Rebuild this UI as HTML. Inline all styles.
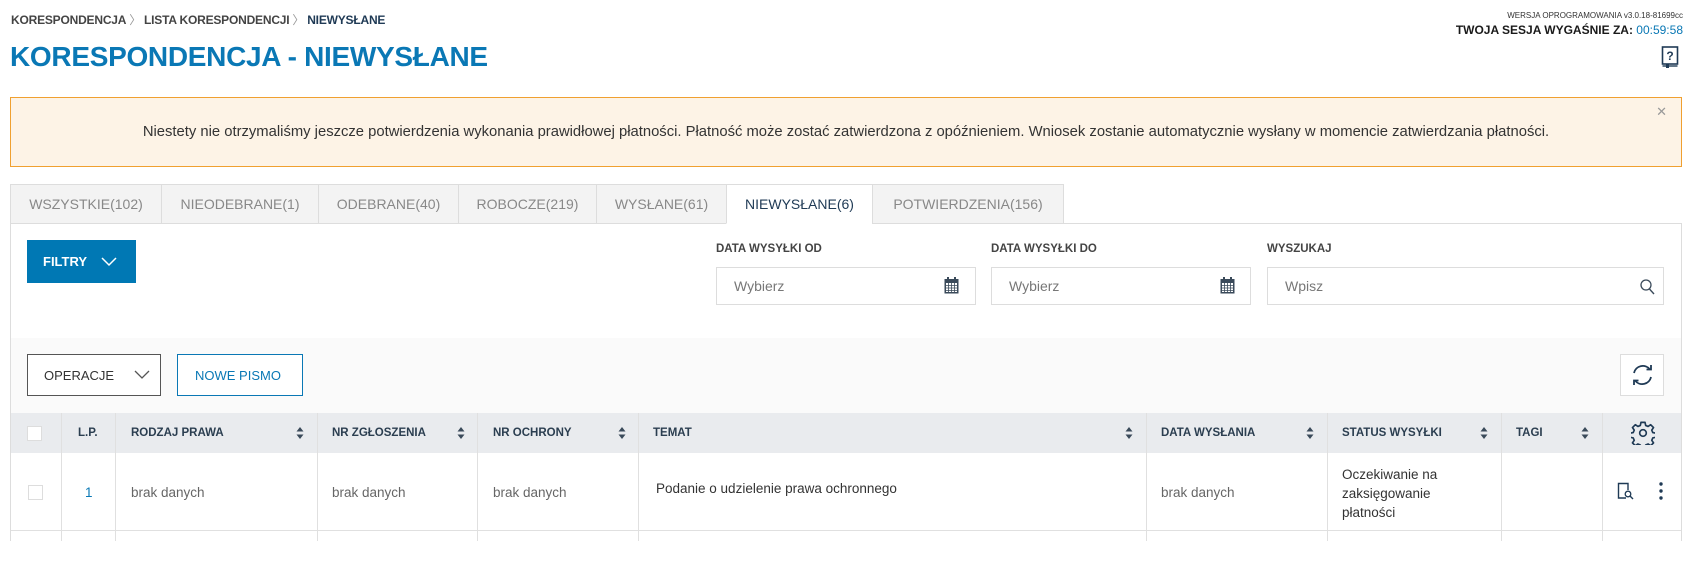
<!DOCTYPE html>
<html><head><meta charset="utf-8"><style>
*{box-sizing:border-box;margin:0;padding:0}
body{width:1699px;height:565px;overflow:hidden;background:#fff;font-family:"Liberation Sans",sans-serif;color:#333;position:relative}
.a{position:absolute}
.bc{left:11px;top:11px;font-size:12px;font-weight:bold;color:#444;letter-spacing:-0.2px}
.bc span{color:#999;font-weight:normal;margin:0 3px}
.bc b{color:#1f3a55}
.title{left:10px;top:41px;font-size:28px;font-weight:bold;color:#0a78b5;letter-spacing:-0.3px}
.ver{right:16px;top:11px;font-size:8px;color:#333}
.ses{right:16px;top:23px;font-size:12px;font-weight:bold;color:#1a1a1a}
.ses i{font-style:normal;color:#0a78b5;font-weight:normal}
.alert{left:10px;top:97px;width:1672px;height:70px;background:#fdf3e6;border:1px solid #f0a030;font-size:14.8px;color:#333;text-align:center;line-height:68px}
.close{right:14px;top:-1px;line-height:30px;color:#999;font-size:13px}
.tabs{left:10px;top:184px;height:40px;display:flex}
.tab{height:40px;background:#f3f3f3;border:1px solid #ddd;border-right:none;color:#888;font-size:14px;display:flex;align-items:center;justify-content:center}
.tab.act{background:#fff;color:#1f3a55;border-bottom-color:#fff}
.panel{left:10px;top:223px;width:1672px;height:318px;border:1px solid #ddd;border-bottom:none}
.btnf{left:27px;top:240px;width:109px;height:43px;background:#0078b4;color:#fff;font-weight:bold;font-size:13px;display:flex;align-items:center;padding-left:16px}
.lbl{font-size:11.5px;font-weight:bold;color:#444;top:243px}
.inp{top:267px;height:38px;border:1px solid #ddd;background:#fff;font-size:14px;color:#777;padding-left:17px;line-height:36px}
.tool{left:11px;top:338px;width:1670px;height:75px;background:#fafafa}
.btn{top:354px;height:42px;font-size:13px;display:flex;align-items:center;padding-left:16px;background:#fff}
.thead{left:11px;top:413px;width:1670px;height:40px;background:#e9ebee}
.th{top:413px;height:40px;line-height:40px;font-size:11.5px;font-weight:bold;color:#2b3e50}
.vl{width:1px;background:#e0e0e0;top:413px;height:128px}
.td{font-size:13.5px;color:#666}
.sort{width:8px;height:14px;top:426px}
</style></head><body>
<div class="a bc">KORESPONDENCJA<span>〉</span>LISTA KORESPONDENCJI<span>〉</span><b>NIEWYSŁANE</b></div>
<div class="a title">KORESPONDENCJA - NIEWYSŁANE</div>
<div class="a ver">WERSJA OPROGRAMOWANIA v3.0.18-81699cc</div>
<div class="a ses">TWOJA SESJA WYGAŚNIE ZA: <i>00:59:58</i></div>
<svg class="a" style="left:1661px;top:46px" width="18" height="23" viewBox="0 0 18 23"><rect x="1.5" y="1" width="15" height="17" fill="none" stroke="#1f3a55" stroke-width="1.6"/><line x1="1.5" y1="20" x2="16.5" y2="20" stroke="#1f3a55" stroke-width="1.4"/><rect x="5" y="18" width="3" height="4" fill="#1f3a55"/><text x="9" y="14" font-size="12" font-weight="bold" text-anchor="middle" fill="#1f3a55" font-family="Liberation Sans">?</text></svg>
<div class="a alert">Niestety nie otrzymaliśmy jeszcze potwierdzenia wykonania prawidłowej płatności. Płatność może zostać zatwierdzona z opóźnieniem. Wniosek zostanie automatycznie wysłany w momencie zatwierdzania płatności.<div class="a close">✕</div></div>
<div class="a panel"></div>
<div class="a tabs">
<div class="tab" style="width:151px">WSZYSTKIE(102)</div>
<div class="tab" style="width:157px">NIEODEBRANE(1)</div>
<div class="tab" style="width:140px">ODEBRANE(40)</div>
<div class="tab" style="width:138px">ROBOCZE(219)</div>
<div class="tab" style="width:130px">WYSŁANE(61)</div>
<div class="tab act" style="width:146px">NIEWYSŁANE(6)</div>
<div class="tab" style="width:192px;border-right:1px solid #ddd">POTWIERDZENIA(156)</div>
</div>
<div class="a btnf">FILTRY <svg style="margin-left:14px" width="16" height="10" viewBox="0 0 16 10"><path d="M1 1L8 8L15 1" fill="none" stroke="#fff" stroke-width="1.5"/></svg></div>
<div class="a lbl" style="left:716px">DATA WYSYŁKI OD</div>
<div class="a lbl" style="left:991px">DATA WYSYŁKI DO</div>
<div class="a lbl" style="left:1267px">WYSZUKAJ</div>
<div class="a inp" style="left:716px;width:260px">Wybierz</div>
<div class="a inp" style="left:991px;width:260px">Wybierz</div>
<div class="a inp" style="left:1267px;width:397px">Wpisz</div>
<svg class="a" style="left:944px;top:277px" width="15" height="17" viewBox="0 0 15 17"><rect x="0.5" y="2" width="14" height="14.5" fill="#3a4a5a"/><rect x="3" y="0" width="2" height="4" fill="#3a4a5a"/><rect x="10" y="0" width="2" height="4" fill="#3a4a5a"/><rect x="2" y="6" width="11" height="9" fill="#fff"/><path d="M2 8.5h11M2 11h11M2 13.5h11M4.5 6v9M7.5 6v9M10.5 6v9" stroke="#3a4a5a" stroke-width="0.8"/></svg>
<svg class="a" style="left:1220px;top:277px" width="15" height="17" viewBox="0 0 15 17"><rect x="0.5" y="2" width="14" height="14.5" fill="#3a4a5a"/><rect x="3" y="0" width="2" height="4" fill="#3a4a5a"/><rect x="10" y="0" width="2" height="4" fill="#3a4a5a"/><rect x="2" y="6" width="11" height="9" fill="#fff"/><path d="M2 8.5h11M2 11h11M2 13.5h11M4.5 6v9M7.5 6v9M10.5 6v9" stroke="#3a4a5a" stroke-width="0.8"/></svg>
<svg class="a" style="left:1640px;top:279px" width="15" height="16" viewBox="0 0 15 16"><circle cx="6" cy="6" r="5" fill="none" stroke="#3a4a5a" stroke-width="1.3"/><path d="M9.5 10L14 15" stroke="#3a4a5a" stroke-width="1.4"/></svg>
<div class="a tool"></div>
<div class="a btn" style="left:27px;width:134px;border:1px solid #555;color:#333">OPERACJE <svg style="margin-left:20px" width="16" height="10" viewBox="0 0 16 10"><path d="M1 1L8 8L15 1" fill="none" stroke="#555" stroke-width="1.3"/></svg></div>
<div class="a btn" style="left:177px;width:126px;border:1px solid #0a78b5;color:#0a78b5;padding-left:17px">NOWE PISMO</div>
<div class="a" style="left:1620px;top:354px;width:44px;height:42px;border:1px solid #ddd;background:#fff"></div>
<svg class="a" style="left:1630px;top:362px" width="25" height="26" viewBox="0 0 25 26"><path d="M4 11A9 9 0 0 1 20 7.5M21 15A9 9 0 0 1 5 18.5" fill="none" stroke="#1f3a55" stroke-width="1.8"/><path d="M16.5 7.5h4.5V3" fill="none" stroke="#1f3a55" stroke-width="1.8"/><path d="M8.5 18.5H4V23" fill="none" stroke="#1f3a55" stroke-width="1.8"/></svg>
<div class="a thead"></div>
<div class="a" style="left:27px;top:426px;width:15px;height:15px;background:#fff;border:1px solid #ddd"></div>
<div class="a th" style="left:78px">L.P.</div>
<div class="a th" style="left:131px">RODZAJ PRAWA</div>
<div class="a th" style="left:332px">NR ZGŁOSZENIA</div>
<div class="a th" style="left:493px">NR OCHRONY</div>
<div class="a th" style="left:653px">TEMAT</div>
<div class="a th" style="left:1161px">DATA WYSŁANIA</div>
<div class="a th" style="left:1342px">STATUS WYSYŁKI</div>
<div class="a th" style="left:1516px">TAGI</div>
<svg width="0" height="0" style="position:absolute"><defs><g id="s"><path d="M0.5 5.5L4 1L7.5 5.5Z M0.5 8.5L4 13L7.5 8.5Z" fill="#3a4a5a"/></g></defs></svg>
<svg class="a sort" style="left:296px"><use href="#s"/></svg>
<svg class="a sort" style="left:457px"><use href="#s"/></svg>
<svg class="a sort" style="left:618px"><use href="#s"/></svg>
<svg class="a sort" style="left:1125px"><use href="#s"/></svg>
<svg class="a sort" style="left:1306px"><use href="#s"/></svg>
<svg class="a sort" style="left:1480px"><use href="#s"/></svg>
<svg class="a sort" style="left:1581px"><use href="#s"/></svg>
<svg class="a" style="left:1631px;top:421px" width="24" height="24" viewBox="-13 -13 26 26"><path d="M-2.2-11.5h4.4l.7 3.3 2.6 1.1 2.8-1.9 3.1 3.1-1.9 2.8 1.1 2.6 3.3.7v4.4l-3.3.7-1.1 2.6 1.9 2.8-3.1 3.1-2.8-1.9-2.6 1.1-.7 3.3h-4.4l-.7-3.3-2.6-1.1-2.8 1.9-3.1-3.1 1.9-2.8-1.1-2.6-3.3-.7v-4.4l3.3-.7 1.1-2.6-1.9-2.8 3.1-3.1 2.8 1.9 2.6-1.1z" fill="none" stroke="#1f3a55" stroke-width="1.8" stroke-linejoin="round"/><circle r="3.6" fill="none" stroke="#1f3a55" stroke-width="1.8"/></svg>
<div class="a vl" style="left:61px"></div><div class="a vl" style="left:115px"></div><div class="a vl" style="left:317px"></div><div class="a vl" style="left:477px"></div><div class="a vl" style="left:638px"></div><div class="a vl" style="left:1146px"></div><div class="a vl" style="left:1327px"></div><div class="a vl" style="left:1501px"></div><div class="a vl" style="left:1602px"></div>
<div class="a" style="left:11px;top:530px;width:1670px;height:1px;background:#e0e0e0"></div>
<div class="a" style="left:28px;top:485px;width:15px;height:15px;border:1px solid #ddd"></div>
<div class="a td" style="left:85px;top:485px;color:#0a78b5">1</div>
<div class="a td" style="left:131px;top:485px">brak danych</div>
<div class="a td" style="left:332px;top:485px">brak danych</div>
<div class="a td" style="left:493px;top:485px">brak danych</div>
<div class="a td" style="left:656px;top:481px;color:#333">Podanie o udzielenie prawa ochronnego</div>
<div class="a td" style="left:1161px;top:485px">brak danych</div>
<div class="a td" style="left:1342px;top:465px;color:#333;line-height:19px">Oczekiwanie na<br>zaksięgowanie<br>płatności</div>
<svg class="a" style="left:1617px;top:482px" width="18" height="18" viewBox="0 0 18 18"><path d="M9 16H1.5V1.5H11V8" fill="none" stroke="#1f3a55" stroke-width="1.4"/><circle cx="11" cy="12" r="2.8" fill="none" stroke="#1f3a55" stroke-width="1.3"/><path d="M13 14L16 17" stroke="#1f3a55" stroke-width="1.4"/></svg>
<svg class="a" style="left:1659px;top:482px" width="4" height="18" viewBox="0 0 4 18"><circle cx="2" cy="2" r="1.7" fill="#1f3a55"/><circle cx="2" cy="9" r="1.7" fill="#1f3a55"/><circle cx="2" cy="16" r="1.7" fill="#1f3a55"/></svg>
</body></html>
